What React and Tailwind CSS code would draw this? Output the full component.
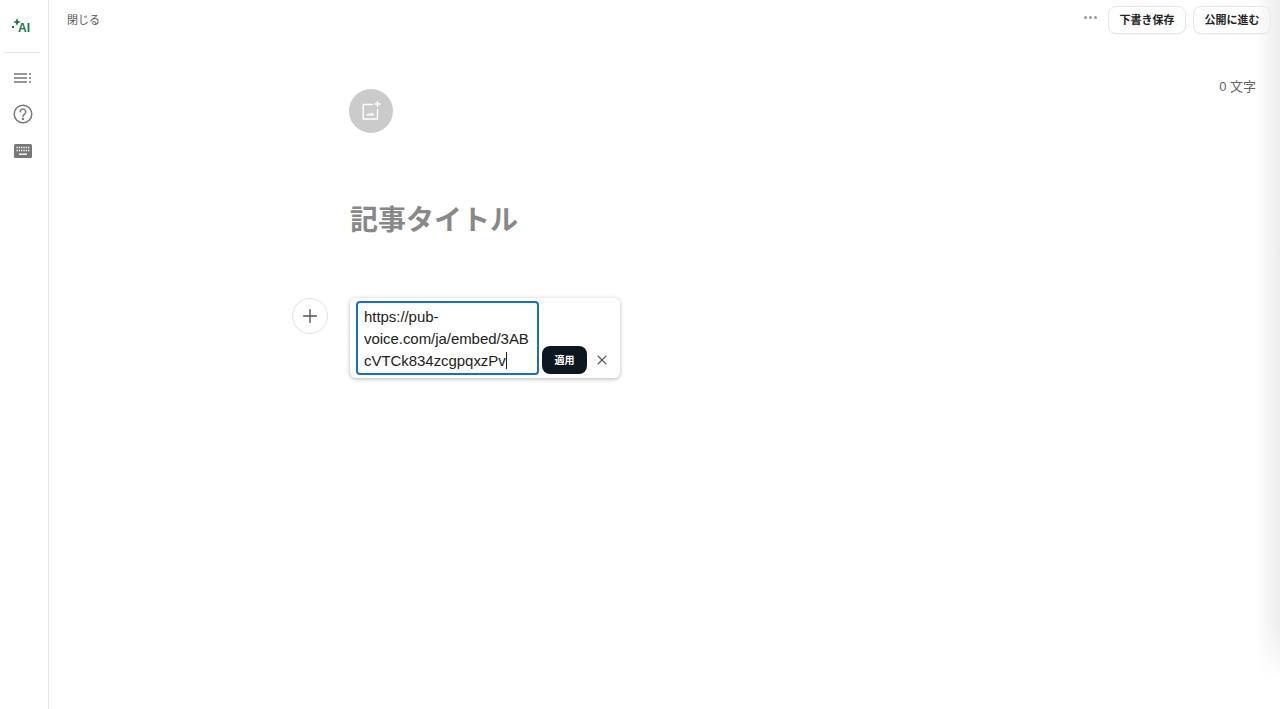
import React from 'react';
import { X, Plus } from 'lucide-react';

const jp = 'font-["Liberation_Sans","Noto_Sans_CJK_JP",sans-serif]';

const AiIcon = () => (
  <div className="flex items-end text-[#15794f]">
    <svg width="9" height="16" viewBox="0 0 9 16" fill="currentColor">
      <path d="M5 0 L6.1 2.9 L9 4 L6.1 5.1 L5 8 L3.9 5.1 L1 4 L3.9 2.9 Z" />
      <rect x="0" y="8" width="2" height="2" />
    </svg>
    <span className="-ml-[3px] text-[12px] font-bold leading-[12px]">AI</span>
  </div>
);

const ListIcon = () => (
  <svg width="17" height="10" viewBox="0 0 17 10" fill="none" stroke="#777" strokeWidth="1.5">
    <path d="M0 1H13M0 5H13M0 9H13" />
    <path d="M15 1H17M15 5H17M15 9H17" />
  </svg>
);

const HelpIcon = () => (
  <svg width="20" height="20" viewBox="0 0 20 20" fill="none" stroke="#777" strokeWidth="1.5">
    <circle cx="10" cy="10" r="8.8" />
    <path d="M7.2 7.8a2.8 2.8 0 1 1 4.4 2.3c-1 .7-1.6 1.2-1.6 2.4" strokeLinecap="round" />
    <circle cx="10" cy="15" r="0.5" fill="#777" />
  </svg>
);

const KeyboardIcon = () => (
  <svg width="18" height="14" viewBox="0 0 18 14">
    <rect width="18" height="14" rx="1.5" fill="#777" />
    <path d="M2.5 3.5H15.5M2.5 6.5H15.5" stroke="#fff" strokeWidth="1.3" strokeDasharray="1.3 1" />
    <path d="M5 10.2H13" stroke="#fff" strokeWidth="1.4" />
  </svg>
);

const ImageAddIcon = () => (
  <svg width="20" height="20" viewBox="0 0 20 20" fill="none" stroke="#fff" strokeWidth="1.4">
    <path d="M12 3.5H2.2V18H16.5V8" />
    <path d="M16.5 0V6M13.5 3H19.5" />
    <path d="M5 14.5L7.2 12L8.8 13.6L10.8 11.4L13.6 14.5Z" fill="#fff" stroke="none" />
  </svg>
);

export default function App() {
  return (
    <div className={`relative flex h-[709px] w-[1280px] overflow-hidden bg-white ${jp}`}>
      <aside className="flex w-[49px] shrink-0 flex-col items-start border-r border-[#e6e6e6] pl-[4px]">
        <div className="flex h-[53px] w-9 items-center border-b border-[#e6e6e6] pl-[8px]">
          <AiIcon />
        </div>
        <div className="ml-[10px] mt-[20px] flex h-[10px] items-center">
          <ListIcon />
        </div>
        <div className="ml-[9px] mt-[21px] flex h-[20px] items-center">
          <HelpIcon />
        </div>
        <div className="ml-[10px] mt-[17px] flex h-[20px] items-center">
          <KeyboardIcon />
        </div>
      </aside>

      <main className="min-w-0 flex-1">
        <header className="flex h-[40px] items-center justify-between pl-[18px] pr-[9px]">
          <span className="text-[11px] text-[#555]">閉じる</span>
          <div className="flex items-center">
            <div className="mb-[6px] mr-[11px] flex gap-[2px]">
              <span className="h-[3px] w-[3px] rounded-full bg-[#999]" />
              <span className="h-[3px] w-[3px] rounded-full bg-[#999]" />
              <span className="h-[3px] w-[3px] rounded-full bg-[#999]" />
            </div>
            <button className="h-[28px] w-[78px] rounded-lg border border-[#e6e6e6] bg-white text-[11px] font-bold text-[#222] shadow-[0_1px_1px_rgba(0,0,0,0.04)]">下書き保存</button>
            <button className="ml-[7px] h-[28px] w-[78px] rounded-lg border border-[#e6e6e6] bg-white text-[11px] font-bold text-[#222] shadow-[0_1px_1px_rgba(0,0,0,0.04)]">公開に進む</button>
          </div>
        </header>

        <div className="flex justify-end pr-[24px] pt-[39px] text-[13px] leading-[16px] text-[#666]">0 文字</div>

        <div className="-mt-[6px] pl-[301px]">
          <div className="-ml-px flex h-[44px] w-[44px] items-center justify-center rounded-full bg-[#cbcbcb]">
            <ImageAddIcon />
          </div>
          <h1 className="mt-[70px] text-[28px] font-bold leading-[36px] text-[#888]">記事タイトル</h1>

          <div className="relative mt-[59px] flex h-[80px] w-[270px] items-end rounded-md bg-white pb-[3px] pl-[6px] shadow-[0_1px_4px_rgba(0,0,0,0.3)]">
            <button className="absolute -left-[58px] top-0 flex h-[36px] w-[36px] items-center justify-center rounded-full border border-[#e2e2e2] bg-white text-[#555]">
              <Plus size={22} strokeWidth={1.5} />
            </button>
            <div className="h-[74px] w-[183px] break-words rounded-[4px] border-2 border-[#1a6fc4] px-[6px] py-[3px] text-[15px] leading-[22px] tracking-[-0.05px] text-[#222]">
              https://pub-voice.com/ja/embed/3ABcVTCk834zcgpqxzPv<span className="inline-block h-[17px] w-px align-[-3px] bg-[#222]" />
            </div>
            <button className="mb-[1px] ml-[3px] h-[28px] w-[45px] rounded-lg bg-[#0c1720] text-[10px] font-bold text-white">適用</button>
            <div className="mb-[7px] ml-[7px] text-[#555]">
              <X size={16} strokeWidth={1.6} />
            </div>
          </div>
        </div>
      </main>

      <div className="pointer-events-none absolute right-0 top-0 h-[709px] w-[25px] bg-gradient-to-r from-transparent to-[#ececec] [mask-image:linear-gradient(to_bottom,black_88%,transparent_96%)]" />
    </div>
  );
}
